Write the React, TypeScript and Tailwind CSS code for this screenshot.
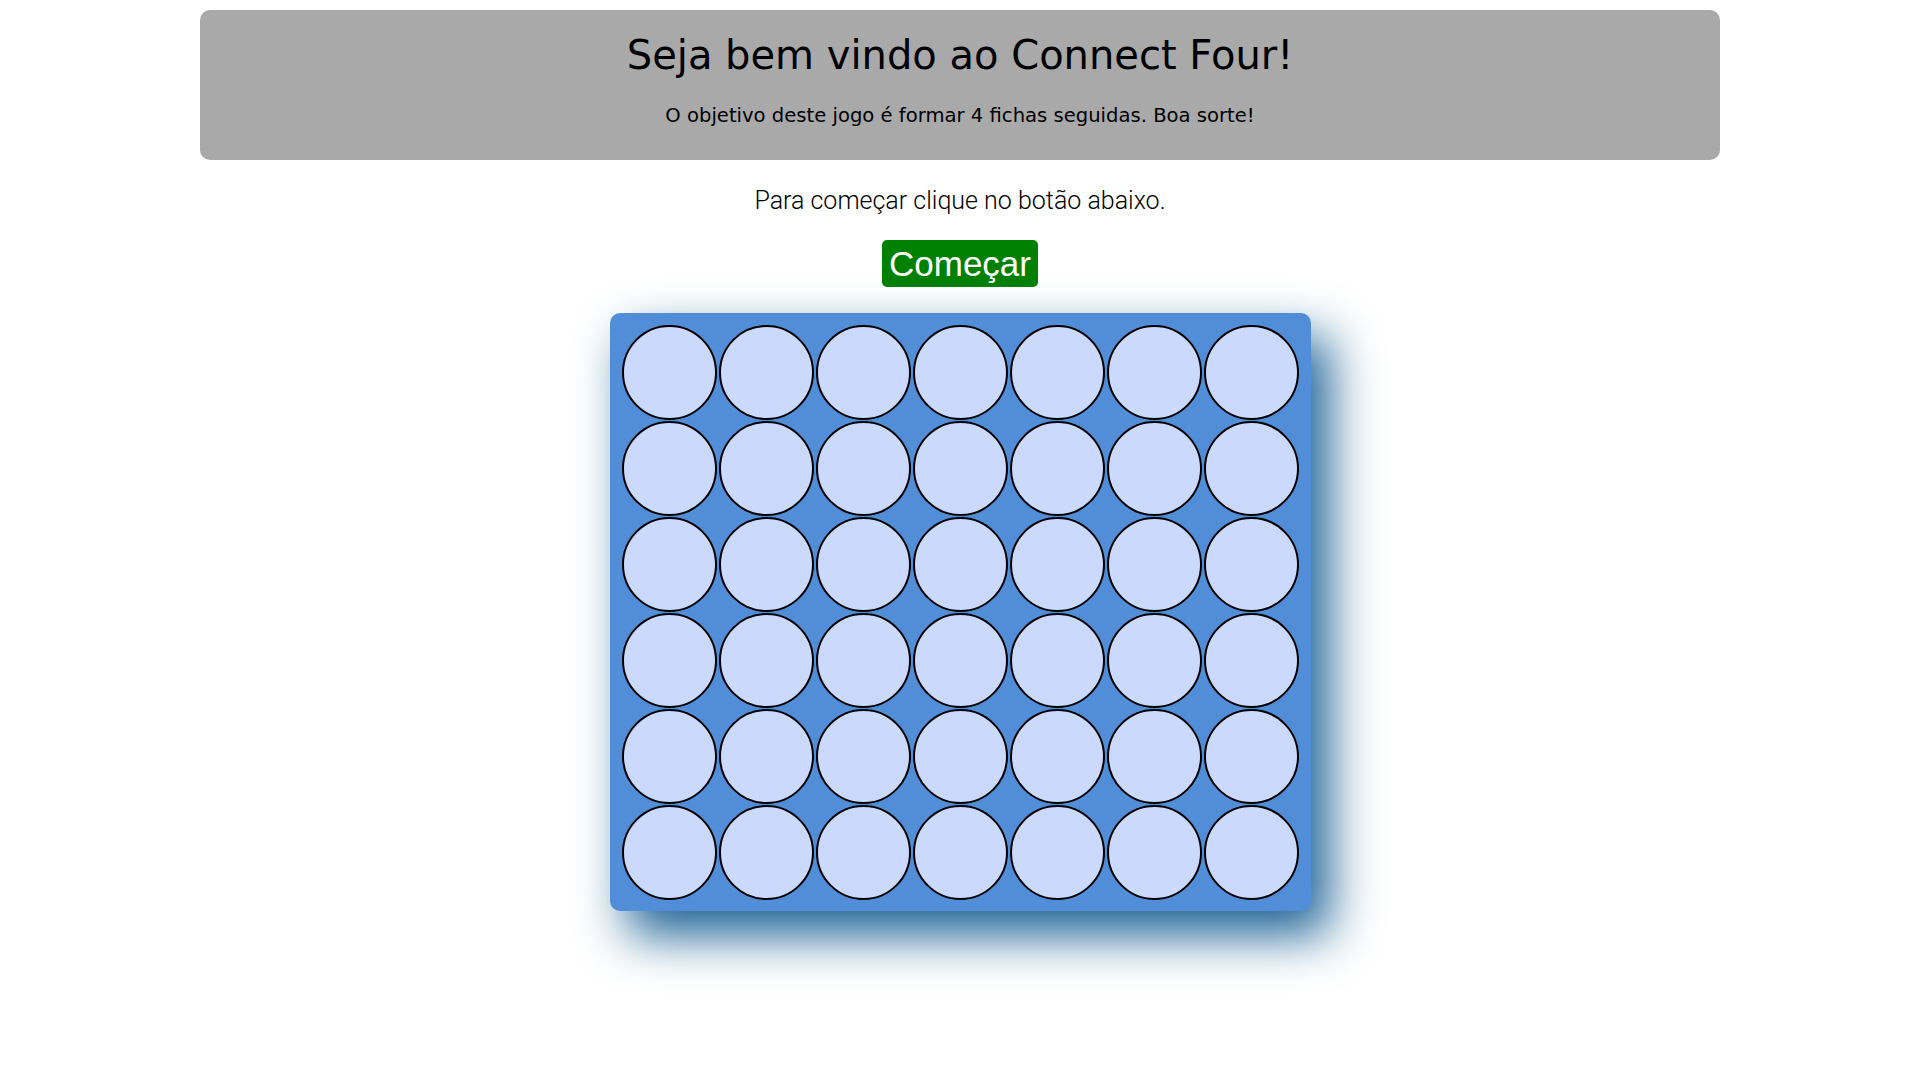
const ROWS = 6
const COLS = 7

export default function App() {
  const cells = Array.from({ length: ROWS * COLS }, (_, i) => i)

  return (
    <div className="min-h-screen bg-white flex flex-col items-center">
      <header className="mt-[10px] w-[1520px] h-[150px] rounded-[10px] bg-[#a9a9a9] text-black text-center pt-[21px] font-['DejaVu_Sans',sans-serif]">
        <h1 className="text-[40px] leading-[48px]">Seja bem vindo ao Connect Four!</h1>
        <p className="mt-[25px] text-[19.6px] leading-[24px]">
          O objetivo deste jogo é formar 4 fichas seguidas. Boa sorte!
        </p>
      </header>

      <p className="mt-[26px] text-[25px] leading-[29px] font-light text-black font-['Roboto',sans-serif]">
        Para começar clique no botão abaixo.
      </p>

      <button className="mt-[25px] w-[156px] h-[47px] rounded-[5px] bg-[#008000] text-white text-[35px] leading-none flex items-center justify-center font-['Liberation_Sans',Arial,sans-serif]">
        Começar
      </button>

      <div className="mt-[26px] mb-20 w-[701px] rounded-[10px] bg-[#528ed8] pt-[12px] pb-[11px] px-[12px] shadow-[18px_24px_50px_#1a6094]">
        <div className="grid grid-cols-7 gap-x-[2px] gap-y-[1px]">
          {cells.map(i => (
            <div
              key={i}
              className="w-[95px] h-[95px] rounded-full border-2 border-black bg-[#cbdafc]"
            />
          ))}
        </div>
      </div>
    </div>
  )
}
